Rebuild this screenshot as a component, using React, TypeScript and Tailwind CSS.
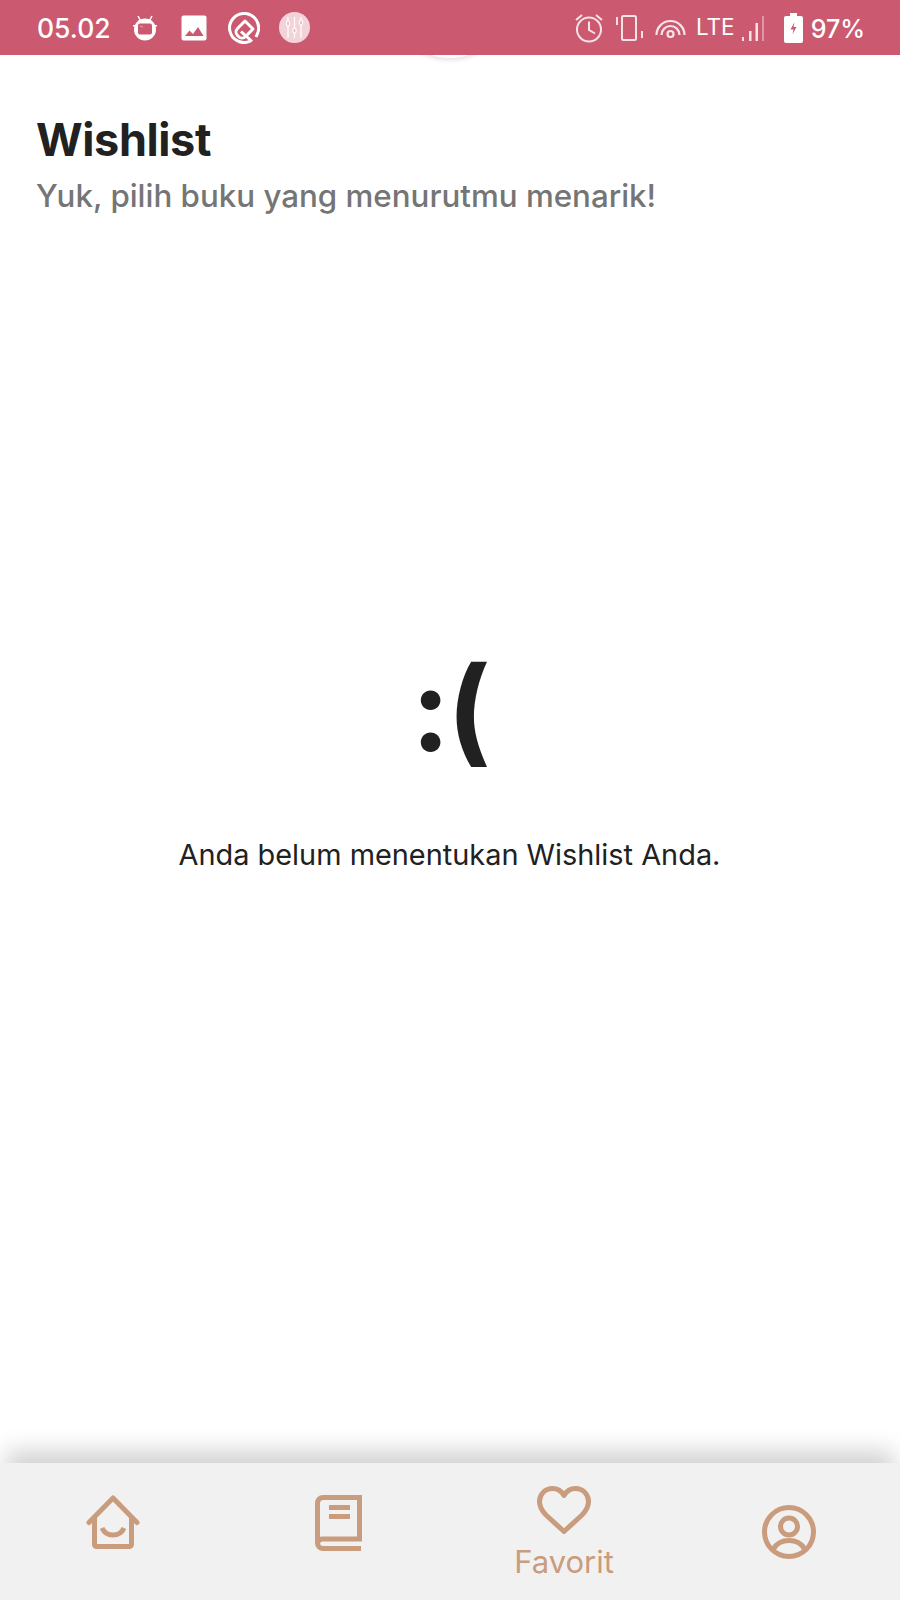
const TAN = "#c99c7d";

function Bot() {
  return (
    <svg width="24" height="26" viewBox="0 0 24 26" fill="none">
      <path d="M5 1l2.500 4.500M19 1l-2.500 4.500" stroke="#fff" strokeWidth="1.500" />
      <circle cx="12" cy="14.500" r="11" fill="#fff" />
      <rect x="0" y="10" width="24" height="1.500" fill="#fff" />
      <rect x="5" y="8.500" width="14" height="11" rx="2" fill="#cb5a70" />
      <path d="M7 11l3 1" stroke="#eeb9c4" strokeWidth="0.800" />
    </svg>
  );
}

function ImageIcon() {
  return (
    <svg width="26" height="26" viewBox="0 0 26 26">
      <rect x="0.500" y="0.500" width="25" height="25" rx="2" fill="#fff" />
      <path d="M4 21l4.500-5.500 3.500 3.500 5-7 5.500 9z" fill="#cb5a70" />
    </svg>
  );
}

function QIcon() {
  return (
    <svg width="32" height="32" viewBox="0 0 32 32" fill="none">
      <path d="M22.500 29A14.500 14.500 0 1 1 29.500 21.500L28 25" stroke="#fff" strokeWidth="3" />
      <path d="M17 9l8 8-7.500 7.500a5 5 0 0 1-7 0l-1-1a5 5 0 0 1 0-7z" stroke="#fff" strokeWidth="3" strokeLinejoin="round" />
      <path d="M13 19.500l11 10" stroke="#fff" strokeWidth="3" />
    </svg>
  );
}

function Sliders() {
  return (
    <svg width="31" height="31" viewBox="0 0 31 31" fill="none">
      <circle cx="15.500" cy="15.500" r="15.500" fill="#f3d3da" />
      <g stroke="#fff" strokeWidth="1.200">
        <path d="M9 5v21M15.500 5v21M22 5v21" />
        <rect x="7.500" y="9" width="3" height="5" rx="1.500" fill="#e9b7c2" />
        <rect x="14" y="16" width="3" height="5" rx="1.500" fill="#e9b7c2" />
        <rect x="20.500" y="8" width="3" height="5" rx="1.500" fill="#e9b7c2" />
      </g>
    </svg>
  );
}

function Alarm() {
  return (
    <svg width="28" height="30" viewBox="0 0 28 30" fill="none" stroke="#f7e3e7" strokeWidth="2">
      <circle cx="14" cy="16.500" r="12" />
      <path d="M14 8.500v8.500l6 3.500" />
      <path d="M1 7l6-5M27 7l-6-5" />
    </svg>
  );
}

function Vibrate() {
  return (
    <svg width="27" height="26" viewBox="0 0 27 26" fill="none" stroke="#f7e3e7" strokeWidth="2">
      <rect x="6" y="1" width="14" height="24" rx="1.500" />
      <path d="M1 2v8M26 16v7" />
    </svg>
  );
}

function Hotspot() {
  return (
    <svg width="31" height="20" viewBox="0 0 31 20" fill="none" stroke="#f7e3e7" strokeWidth="2.200">
      <path d="M1.500 17A14 14 0 0 1 29.500 17" />
      <path d="M6.500 17A9 9 0 0 1 24.500 17" />
      <circle cx="15.500" cy="16" r="3" />
    </svg>
  );
}

function Signal() {
  return (
    <svg width="22" height="26" viewBox="0 0 22 26" fill="#f7e3e7">
      <rect x="0" y="22" width="2" height="4" />
      <rect x="7" y="16" width="2.500" height="10" />
      <rect x="13.500" y="8" width="2.500" height="18" />
      <rect x="20" y="1" width="2" height="25" opacity="0.450" />
    </svg>
  );
}

function Battery() {
  return (
    <svg width="19" height="30" viewBox="0 0 19 30">
      <path d="M6 0h7v3h4a2 2 0 0 1 2 2v23a2 2 0 0 1-2 2h-15a2 2 0 0 1-2-2v-23a2 2 0 0 1 2-2h4z" fill="#fff" />
      <path d="M10.500 9l-4 7.500h3l-1 5 4-7.500h-3z" fill="#cb5a70" />
    </svg>
  );
}

function HomeIcon() {
  return (
    <svg width="54" height="54" viewBox="0 0 54 54" fill="none" stroke={TAN} strokeWidth="5" strokeLinejoin="round" strokeLinecap="round">
      <path d="M3 27.500L27 3l24 24.500" />
      <path d="M8.500 23v26.500a2 2 0 0 0 2 2h33a2 2 0 0 0 2-2V23" />
      <path d="M16 33c2 4.500 6 7 11 7s9-2.500 11-7" strokeLinecap="butt" />
    </svg>
  );
}

function BookIcon() {
  return (
    <svg width="47" height="56" viewBox="0 0 47 56" fill="none" stroke={TAN} strokeWidth="5">
      <path d="M46 53.500H8a5.500 5.500 0 0 1-5.500-5.500V8A5.500 5.500 0 0 1 8 2.500h36.500v41.500H8A5.500 5.500 0 0 0 2.500 48" />
      <path d="M14 12.500h21M14 21.500h21" />
    </svg>
  );
}

function HeartIcon() {
  return (
    <svg width="54" height="48" viewBox="0 0 54 48" fill="none" stroke={TAN} strokeWidth="5" strokeLinejoin="round">
      <path d="M27 9.500C24.500 5 20.500 2.500 15.500 2.500 8 2.500 2.500 8.500 2.500 15.500c0 5 2.500 9.500 6.500 13.500L27 45.500 45 29c4-4 6.500-8.500 6.500-13.500 0-7-5.500-13-13-13-5 0-9 2.500-11.500 7z" />
    </svg>
  );
}

function UserIcon() {
  return (
    <svg width="54" height="54" viewBox="0 0 54 54" fill="none" stroke={TAN} strokeWidth="5">
      <circle cx="27" cy="27" r="24.500" />
      <circle cx="27" cy="21.500" r="8.500" />
      <path d="M11.500 44c3-5.500 9-8.500 15.500-8.500s12.500 3 15.500 8.500" />
    </svg>
  );
}

export default function App() {
  return (
    <div className="relative flex h-[1600px] w-[900px] flex-col overflow-hidden bg-white font-['Inter',sans-serif]">
      <header className="z-20 flex h-[55px] shrink-0 items-center justify-between bg-[#cb5a70] pl-[37px] pr-[35px] text-white">
        <div className="flex items-center">
          <span className="mt-[2px] w-[96px] text-[26.500px] font-medium leading-none">05.02</span>
          <Bot />
          <span className="ml-[24px] flex"><ImageIcon /></span>
          <span className="ml-[21px] flex"><QIcon /></span>
          <span className="ml-[19px] flex"><Sliders /></span>
        </div>
        <div className="flex items-center">
          <Alarm />
          <span className="ml-[13px] flex"><Vibrate /></span>
          <span className="ml-[12px] flex"><Hotspot /></span>
          <span className="ml-[10px] text-[22.500px] leading-none">LTE</span>
          <span className="ml-[7px] flex"><Signal /></span>
          <span className="ml-[20px] flex"><Battery /></span>
          <span className="ml-[8px] mt-[3px] text-[25px] font-medium leading-none">97%</span>
        </div>
      </header>

      <div className="absolute left-[390px] top-[-62px] z-10 h-[120px] w-[120px] rounded-full bg-white shadow-[0_2px_5px_rgba(0,0,0,0.12)]" />

      <main className="z-0 flex flex-1 flex-col pl-[36px] pr-[37px]">
        <h1 className="mt-[57px] text-[45px] font-bold leading-[56px] tracking-[-0.4px] text-[#212121]">Wishlist</h1>
        <p className="mt-[8px] text-[31.300px] font-medium leading-[40px] text-[#757575]">Yuk, pilih buku yang menurutmu menarik!</p>
        <div className="mt-[433px] flex flex-col items-center">
          <div className="text-[116px] font-bold leading-[120px] tracking-[-3px] text-[#212121]">:(</div>
          <p className="mt-[66px] text-[28.900px] leading-[40px] text-[#212121]">Anda belum menentukan Wishlist Anda.</p>
        </div>
      </main>

      <nav className="z-10 grid h-[137px] shrink-0 grid-cols-4 bg-[#f2f1f1] shadow-[0_-18px_22px_-6px_rgba(0,0,0,0.18)]">
        <div className="flex items-start justify-center pt-[32px]"><HomeIcon /></div>
        <div className="flex items-start justify-center pl-[2px] pt-[32px]"><BookIcon /></div>
        <div className="flex flex-col items-center pl-[3px] pt-[23px]">
          <HeartIcon />
          <span className="mt-[8px] text-[31px] leading-[40px] text-[#c99c7d]">Favorit</span>
        </div>
        <div className="flex items-start justify-center pl-[3px] pt-[42px]"><UserIcon /></div>
      </nav>
    </div>
  );
}
